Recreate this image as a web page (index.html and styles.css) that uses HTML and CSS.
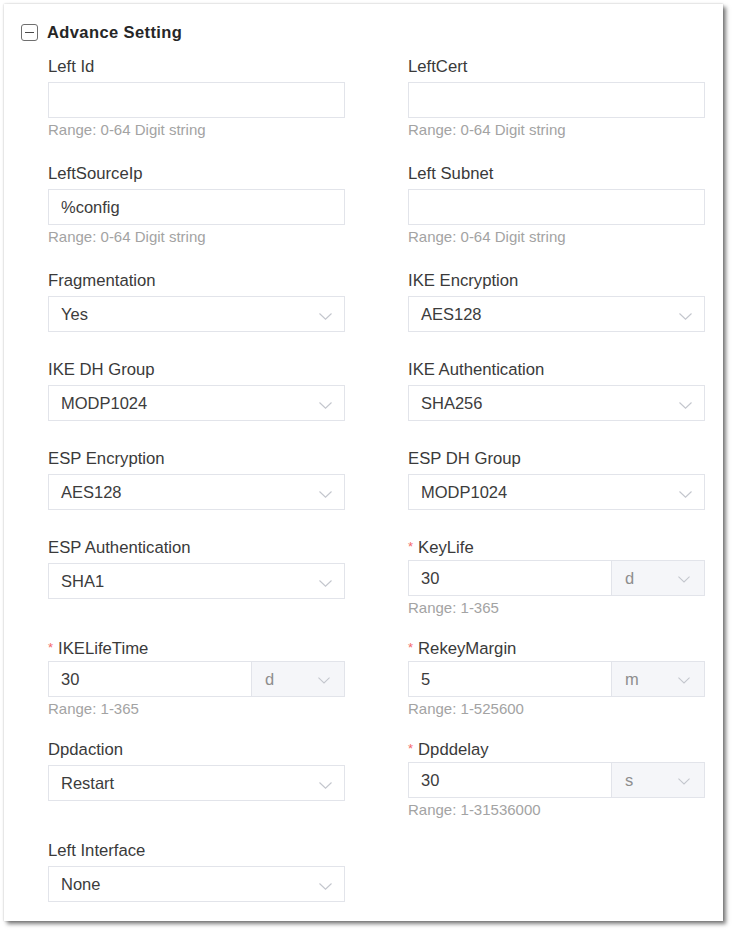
FILE: index.html
```html
<!DOCTYPE html>
<html lang="en">
<head>
<meta charset="utf-8">
<title>Advance Setting</title>
<link rel="stylesheet" href="styles.css">
</head>
<body>
<section class="card">
  <header class="heading">
    <span class="toggle" aria-hidden="true"><span class="toggle__bar"></span></span>
    <h2 class="heading__title">Advance Setting</h2>
  </header>

  <div class="form">
    <div class="field field--hint">
      <div class="label">Left Id</div>
      <div class="control"></div>
      <div class="hint">Range: 0-64 Digit string</div>
    </div>
    <div class="field field--hint">
      <div class="label">LeftCert</div>
      <div class="control"></div>
      <div class="hint">Range: 0-64 Digit string</div>
    </div>

    <div class="field field--hint">
      <div class="label">LeftSourceIp</div>
      <div class="control"><span class="value">%config</span></div>
      <div class="hint">Range: 0-64 Digit string</div>
    </div>
    <div class="field field--hint">
      <div class="label">Left Subnet</div>
      <div class="control"></div>
      <div class="hint">Range: 0-64 Digit string</div>
    </div>

    <div class="field field--select">
      <div class="label">Fragmentation</div>
      <div class="control control--select"><span class="value">Yes</span><svg class="chev" viewBox="0 0 13 7"><polyline points="0.5,0.5 6.5,6.2 12.5,0.5"/></svg></div>
    </div>
    <div class="field field--select">
      <div class="label">IKE Encryption</div>
      <div class="control control--select"><span class="value">AES128</span><svg class="chev" viewBox="0 0 13 7"><polyline points="0.5,0.5 6.5,6.2 12.5,0.5"/></svg></div>
    </div>

    <div class="field field--select">
      <div class="label">IKE DH Group</div>
      <div class="control control--select"><span class="value">MODP1024</span><svg class="chev" viewBox="0 0 13 7"><polyline points="0.5,0.5 6.5,6.2 12.5,0.5"/></svg></div>
    </div>
    <div class="field field--select">
      <div class="label">IKE Authentication</div>
      <div class="control control--select"><span class="value">SHA256</span><svg class="chev" viewBox="0 0 13 7"><polyline points="0.5,0.5 6.5,6.2 12.5,0.5"/></svg></div>
    </div>

    <div class="field field--select">
      <div class="label">ESP Encryption</div>
      <div class="control control--select"><span class="value">AES128</span><svg class="chev" viewBox="0 0 13 7"><polyline points="0.5,0.5 6.5,6.2 12.5,0.5"/></svg></div>
    </div>
    <div class="field field--select">
      <div class="label">ESP DH Group</div>
      <div class="control control--select"><span class="value">MODP1024</span><svg class="chev" viewBox="0 0 13 7"><polyline points="0.5,0.5 6.5,6.2 12.5,0.5"/></svg></div>
    </div>

    <div class="field field--select">
      <div class="label">ESP Authentication</div>
      <div class="control control--select"><span class="value">SHA1</span><svg class="chev" viewBox="0 0 13 7"><polyline points="0.5,0.5 6.5,6.2 12.5,0.5"/></svg></div>
    </div>
    <div class="field field--unit">
      <div class="label"><span class="req">*</span>KeyLife</div>
      <div class="control control--unit"><span class="value">30</span><span class="unit"><span class="unit__text">d</span><svg class="chev chev--sm" viewBox="0 0 13 7"><polyline points="0.5,0.5 6.5,6.2 12.5,0.5"/></svg></span></div>
      <div class="hint">Range: 1-365</div>
    </div>

    <div class="field field--unit">
      <div class="label"><span class="req">*</span>IKELifeTime</div>
      <div class="control control--unit"><span class="value">30</span><span class="unit"><span class="unit__text">d</span><svg class="chev chev--sm" viewBox="0 0 13 7"><polyline points="0.5,0.5 6.5,6.2 12.5,0.5"/></svg></span></div>
      <div class="hint">Range: 1-365</div>
    </div>
    <div class="field field--unit">
      <div class="label"><span class="req">*</span>RekeyMargin</div>
      <div class="control control--unit"><span class="value">5</span><span class="unit"><span class="unit__text">m</span><svg class="chev chev--sm" viewBox="0 0 13 7"><polyline points="0.5,0.5 6.5,6.2 12.5,0.5"/></svg></span></div>
      <div class="hint">Range: 1-525600</div>
    </div>

    <div class="field field--select">
      <div class="label">Dpdaction</div>
      <div class="control control--select"><span class="value">Restart</span><svg class="chev" viewBox="0 0 13 7"><polyline points="0.5,0.5 6.5,6.2 12.5,0.5"/></svg></div>
    </div>
    <div class="field field--unit">
      <div class="label"><span class="req">*</span>Dpddelay</div>
      <div class="control control--unit"><span class="value">30</span><span class="unit"><span class="unit__text">s</span><svg class="chev chev--sm" viewBox="0 0 13 7"><polyline points="0.5,0.5 6.5,6.2 12.5,0.5"/></svg></span></div>
      <div class="hint">Range: 1-31536000</div>
    </div>

    <div class="field field--select field--last">
      <div class="label">Left Interface</div>
      <div class="control control--select"><span class="value">None</span><svg class="chev" viewBox="0 0 13 7"><polyline points="0.5,0.5 6.5,6.2 12.5,0.5"/></svg></div>
    </div>
  </div>
</section>
</body>
</html>
```

FILE: styles.css
```css
* { box-sizing: border-box; }

html, body {
  margin: 0;
  padding: 0;
  background: #ffffff;
}

body {
  font-family: "Liberation Sans", Arial, sans-serif;
  color: #333333;
  padding: 4px 0 0 4px;
  min-height: 931px;
}

.card {
  width: 719px;
  background: #ffffff;
  padding: 20px 0 19px 0;
  box-shadow: 3px 3px 4px rgba(0, 0, 0, 0.5), 0 0 2px rgba(0, 0, 0, 0.22);
}

.heading {
  display: flex;
  align-items: center;
  gap: 9px;
  padding-left: 17px;
  height: 17px;
  margin-bottom: 16px;
}

.toggle {
  width: 17px;
  height: 17px;
  border: 1.5px solid #6f6f6f;
  border-radius: 3px;
  display: flex;
  align-items: center;
  justify-content: center;
  flex: none;
}

.toggle__bar {
  width: 9px;
  height: 1.5px;
  background: #4a4a4a;
}

.heading__title {
  margin: 0;
  font-size: 16.5px;
  font-weight: bold;
  letter-spacing: 0.4px;
  color: #262626;
  line-height: 17px;
}

.form {
  display: grid;
  grid-template-columns: 297px 297px;
  column-gap: 63px;
  align-items: start;
  padding-left: 44px;
}

.field { margin-bottom: 28px; }
.field--hint { margin-bottom: 24px; }
.field--unit { margin-bottom: 21px; }
.field--last { margin-bottom: 0; }

.label {
  font-size: 16.7px;
  line-height: 20px;
  height: 20px;
  color: #3a3a3a;
  margin-bottom: 5px;
  white-space: nowrap;
}

.field--unit .label { margin-bottom: 2px; }

.req {
  color: #f46a6a;
  font-size: 13px;
  margin-right: 5px;
  position: relative;
  top: -2px;
}

.control {
  height: 36px;
  border: 1px solid #e2e4ea;
  background: #ffffff;
  display: flex;
  align-items: center;
  padding: 0 12px;
}

.value {
  font-size: 16.5px;
  color: #3c3c3c;
  flex: 1;
  white-space: nowrap;
}

.control--select {
  padding-right: 12px;
}

.chev {
  width: 13px;
  height: 7px;
  flex: none;
  margin-top: 5px;
  fill: none;
  stroke: #c3c6cd;
  stroke-width: 1.1;
}

.chev--sm {
  width: 12px;
  margin-top: 3px;
}

.control--unit {
  padding: 0 0 0 12px;
}

.unit {
  flex: none;
  width: 93px;
  height: 100%;
  background: #f5f6f9;
  border-left: 1px solid #e2e4ea;
  display: flex;
  align-items: center;
  padding: 0 14px 0 13px;
}

.unit__text {
  flex: 1;
  font-size: 16.5px;
  color: #8e8e8e;
}

.hint {
  font-size: 15px;
  line-height: 20px;
  color: #a3a3a3;
  margin-top: 2px;
  white-space: nowrap;
}
```
